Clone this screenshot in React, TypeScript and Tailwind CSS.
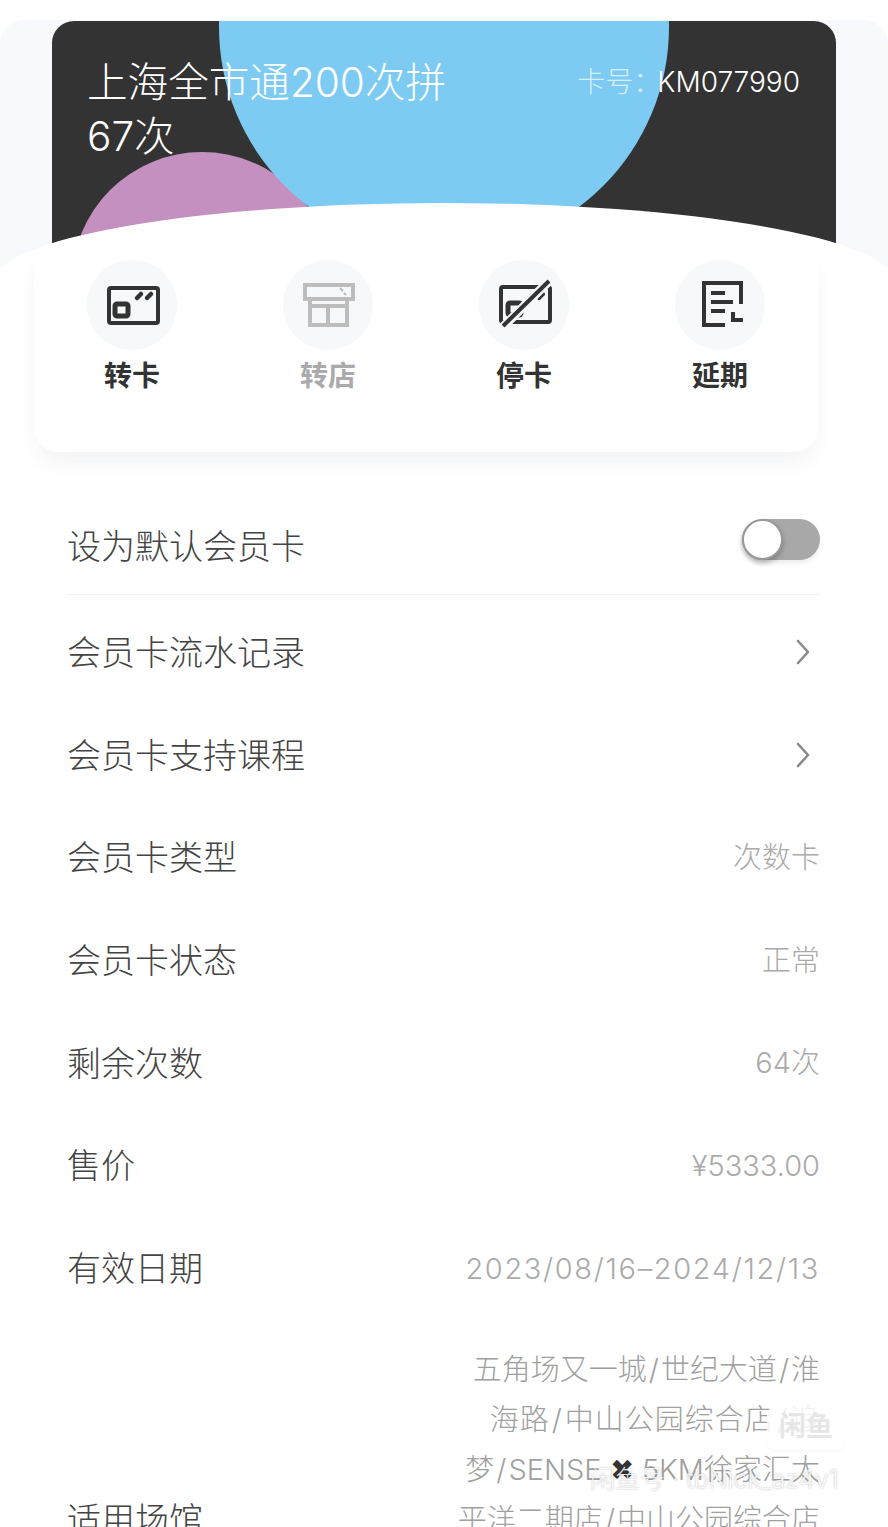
import { ReactNode } from 'react';

// icon glyphs sit in a 90x90 box, same size as the grey circle behind them
const CardIcon = () => (
    <svg viewBox="0 0 90 90" className="w-[90px] h-[90px]" fill="none" stroke="#333" strokeWidth="4">
        <rect x="22" y="28" width="49" height="35" rx="2" />
        <rect x="28" y="44" width="13" height="12" rx="2" strokeWidth="5" />
        <path d="M50 38l4-4M60 38l4-4" strokeLinecap="round" strokeWidth="4.5" />
    </svg>
);

const ShopIcon = () => (
    <svg viewBox="0 0 90 90" className="w-[90px] h-[90px]" fill="none" stroke="#bdbdbd" strokeWidth="4">
        <rect x="22" y="25" width="48" height="14" />
        <path d="M27 39v26h37V39M27 46h37M45 46v19" />
        <path d="M57 28l3 3M61 33l2 2" strokeWidth="2" />
    </svg>
);

const StopCardIcon = () => (
    <svg viewBox="0 0 90 90" className="w-[90px] h-[90px]" fill="none" stroke="#333" strokeWidth="4">
        <rect x="22" y="27" width="49" height="35" rx="2" />
        <rect x="29" y="43" width="13" height="12" rx="2" strokeWidth="5" />
        <path d="M50 38l4-4M60 38l4-4" strokeLinecap="round" />
        <path d="M71 20L24 67" stroke="#f7f8fa" strokeWidth="9" />
        <path d="M70 21L24 66" />
    </svg>
);

const DelayIcon = () => (
    <svg viewBox="0 0 90 90" className="w-[90px] h-[90px]" fill="none" stroke="#333" strokeWidth="4">
        <path d="M66 44V23H29v42h21" />
        <path d="M36 33h14M36 42h22M36 51h14M58 52v8h10" />
    </svg>
);

const Chevron = () => (
    <svg viewBox="0 0 14 26" className="w-[14px] h-[26px]" fill="none" stroke="#8a8a8a" strokeWidth="2.6" strokeLinecap="round" strokeLinejoin="round">
        <path d="M2 2l10 11L2 24" />
    </svg>
);

// slashes in the venue list are wider than the font's own
const Slash = () => <span className="mx-[2px]">/</span>;

const tools: { label: string; icon: ReactNode; muted?: boolean }[] = [
    { label: '转卡', icon: <CardIcon /> },
    { label: '转店', icon: <ShopIcon />, muted: true },
    { label: '停卡', icon: <StopCardIcon /> },
    { label: '延期', icon: <DelayIcon /> },
];

const infoRows = [
    { label: '会员卡类型', value: '次数卡' },
    { label: '会员卡状态', value: '正常' },
    { label: '剩余次数', value: '64次' },
    { label: '售价', value: '¥5333.00' },
    { label: '有效日期', value: '2023/08/16–2024/12/13', wide: true },
];

const App = () => {
    return (
        <div className="relative h-[1527px] w-[888px] overflow-hidden bg-white font-['Inter','Noto_Sans_CJK_SC',sans-serif] font-light text-[#444]">
            {/* header band, card and curved sheet */}
            <div className="relative pt-[21px]">
                <div className="absolute left-0 right-0 top-[20px] h-[262px] rounded-t-[24px] bg-[#f8f9fd]" />
                <div className="relative mx-[52px] h-[240px] overflow-hidden rounded-t-[22px] bg-[#333333] text-white">
                    <div className="absolute left-[20px] top-[131px] h-[260px] w-[260px] rounded-full bg-[#c390bf]" />
                    <div className="absolute left-[167px] top-[-219px] h-[450px] w-[450px] rounded-full bg-[#7dcbf3]" />
                    <div className="relative flex items-start justify-between pl-[35px] pr-[36px] pt-[35px]">
                        <div className="w-[370px] text-[40.6px] leading-[54px]">上海全市通200次拼67次</div>
                        <div className="mt-[10px] whitespace-nowrap text-[28px] leading-[32px]">
                            <span className="mr-[-4px] text-white/70">卡号：</span>
                            <span>KM077990</span>
                        </div>
                    </div>
                </div>
                <div className="absolute left-[-6px] top-[203px] h-[158px] w-[900px] rounded-[50%] bg-white" />
                <div className="relative ml-[34px] mr-[70px] -mt-[12px] h-[203px] rounded-b-[24px] bg-white shadow-[0_14px_24px_-6px_rgba(40,50,90,0.07)]">
                    <div className="grid grid-cols-4 pt-[11px]">
                        {tools.map((tool) => (
                            <div key={tool.label} className="flex flex-col items-center">
                                <div className="h-[90px] w-[90px] rounded-full bg-[#f7f8fa]">{tool.icon}</div>
                                <div className={`mt-[6px] text-[28px] font-bold leading-[40px] ${tool.muted ? 'text-[#aaaaaa]' : 'text-[#333333]'}`}>
                                    {tool.label}
                                </div>
                            </div>
                        ))}
                    </div>
                </div>
            </div>

            {/* settings list */}
            <div className="pl-[67px] pr-[68px]">
                <div className="-ml-[1px] mt-[45px] flex h-[98px] items-center justify-between border-b border-[#f2f2f4] pl-[1px]">
                    <span className="mt-[2px] text-[34px]">设为默认会员卡</span>
                    <div className="mb-[13px] flex h-[41px] w-[78px] rounded-full bg-[#a8a8a8] shadow-[0_3px_5px_rgba(0,0,0,0.08)]">
                        <div className="h-[41px] w-[41px] rounded-full border-2 border-[#999] bg-white shadow-[0_3px_5px_rgba(0,0,0,0.25)]" />
                    </div>
                </div>
                <div className="mt-[6px]">
                    {['会员卡流水记录', '会员卡支持课程'].map((label) => (
                        <div key={label} className="flex h-[102.6px] items-center justify-between">
                            <span className="mt-[1px] text-[34px]">{label}</span>
                            <span className="mr-[10px]"><Chevron /></span>
                        </div>
                    ))}
                    {infoRows.map((row) => (
                        <div key={row.label} className="flex h-[102.6px] items-center justify-between">
                            <span className="mt-[1px] text-[34px]">{row.label}</span>
                            <span className={`mt-[1px] text-[29px] text-[#aaaaaa] ${row.wide ? 'tracking-[1.65px]' : ''}`}>{row.value}</span>
                        </div>
                    ))}
                    <div className="mt-[26px] flex items-end justify-between">
                        <span className="text-[34px] leading-[50px]">适用场馆</span>
                        <div className="text-right text-[29px] leading-[50px] text-[#a0a0a0]">
                            <div>五角场又一城<Slash />世纪大道<Slash />淮</div>
                            <div className="tracking-[1px]">海路<Slash />中山公园综合店<Slash />追</div>
                            <div>梦<Slash />SENSE <span className="text-[#333333]">✖</span> 5KM徐家汇太</div>
                            <div>平洋二期店<Slash />中山公园综合店</div>
                        </div>
                    </div>
                </div>
            </div>

            {/* marketplace watermark over the list */}
            <div className="absolute left-[767px] top-[1405px] flex h-[45px] w-[78px] items-center justify-center rounded-[10px] bg-white/85 text-[27px] font-bold text-[#e6e6e6] shadow-[0_1px_3px_rgba(0,0,0,0.04)]">
                闲鱼
            </div>
            <div className="absolute left-[590px] top-[1464px] whitespace-nowrap text-[25px] leading-[30px] text-white/85 [text-shadow:0_0_2px_rgba(0,0,0,0.3)]">
                闲鱼号 · tbNick_az4v1
            </div>
        </div>
    );
};

export default App;
